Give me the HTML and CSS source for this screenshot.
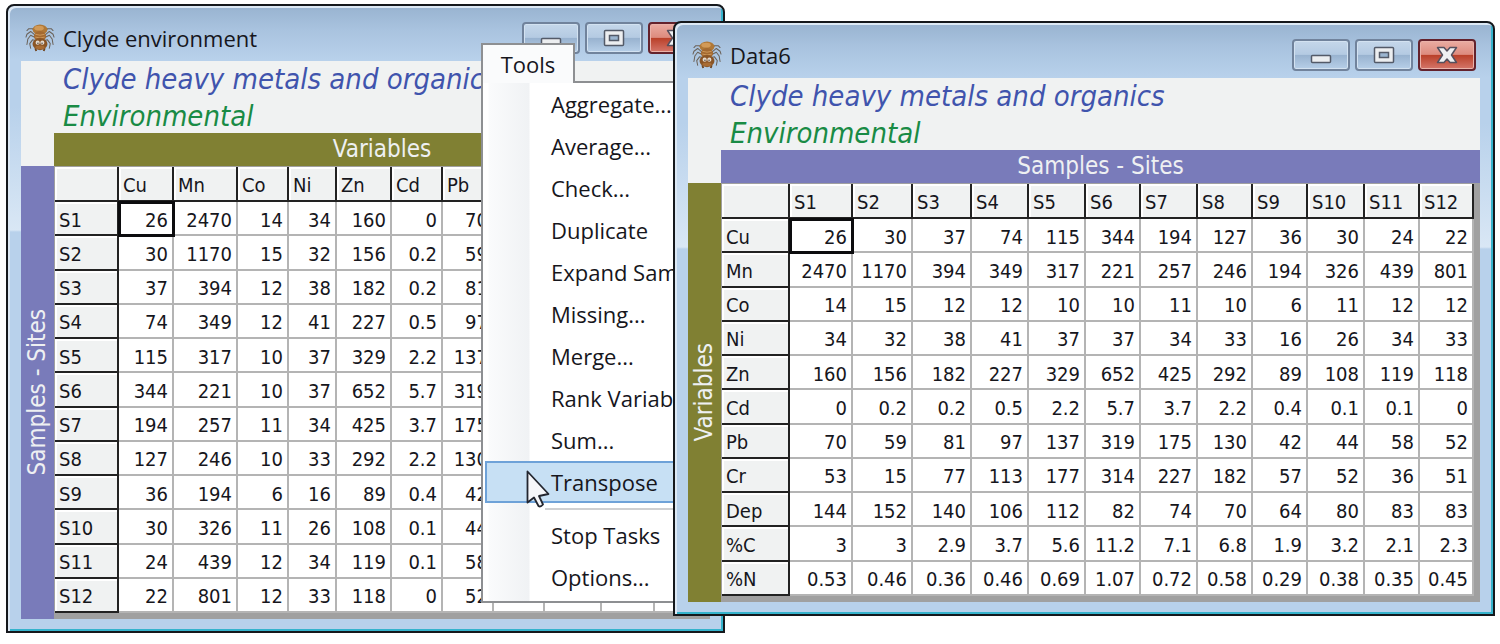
FILE: index.html
```html
<!DOCTYPE html>
<html lang="en">
<head>
<meta charset="utf-8">
<title>Clyde environment</title>
<link rel="stylesheet" href="styles.css">
</head>
<body>
<svg class="defs" aria-hidden="true">
  <symbol id="spider" viewBox="0 0 30 30">
    <g fill="none" stroke="#6b6259" stroke-width="1.1" stroke-linecap="round" stroke-linejoin="round">
      <path d="M11 10 7 5 3 5 1 7M19 10l4-5 4 0 2 2M11 13 5 8 1 11 0 14M19 13l6-5 4 3 1 3M11 15 5 12 2 16 1 22M19 15l6-3 3 4 1 6M11 18l-4-1-3 4 1 5M19 18l4-1 3 4-1 5"/>
    </g>
    <path d="M10 26l1 3M20 26l-1 3" stroke="#70451f" stroke-width="2"/>
    <ellipse cx="15" cy="6" rx="8" ry="5.5" fill="#b07836"/>
    <ellipse cx="14" cy="4.5" rx="5" ry="2.500" fill="#d29a57"/>
    <ellipse cx="15" cy="13" rx="6.500" ry="5.500" fill="#a46a31"/>
    <path d="M10 11q5 2 10 0M10 14q5 2 10 0" stroke="#cf9a5b" fill="none"/>
    <ellipse cx="15" cy="21.500" rx="8" ry="6.500" fill="#8a5526"/>
    <ellipse cx="15" cy="25" rx="5" ry="2" fill="#a86c34"/>
    <circle cx="12.500" cy="20" r="2.200" fill="#e4d9cc"/><circle cx="17.500" cy="20" r="2.200" fill="#e4d9cc"/>
    <circle cx="12.800" cy="20.500" r=".8" fill="#4c4640"/><circle cx="17.200" cy="20.500" r=".8" fill="#4c4640"/>
  </symbol>
  <symbol id="min" viewBox="0 0 22 18">
    <rect x="1.500" y="9.500" width="19" height="7" rx="1" fill="#eceef0" stroke="#535a68" stroke-width="1.500"/>
  </symbol>
  <symbol id="max" viewBox="0 0 22 18">
    <rect x="1.500" y="1.500" width="19" height="15" rx="1" fill="#eceef0" stroke="#535a68" stroke-width="1.500"/>
    <rect x="6.500" y="6.500" width="9" height="5" fill="#9bb5d0" stroke="#535a68" stroke-width="1.500"/>
  </symbol>
  <symbol id="close" viewBox="0 0 22 18">
    <path d="M1.500 1.500h6.500l3 3.500 3-3.500h6.500l-5 7.500 5 7.500h-6.500l-3-3.500-3 3.500h-6.500l5-7.500z" fill="#eff0f2" stroke="#56505e" stroke-width="1.500" stroke-linejoin="round"/>
  </symbol>
</svg>

<main class="desktop">
  <section class="window window-clyde" aria-label="Clyde environment">
    <header class="titlebar">
      <svg class="app-icon" aria-hidden="true"><use href="#spider"/></svg>
      <h1 class="caption">Clyde environment</h1>
      <div class="controls">
        <button class="control" aria-label="Minimize"><svg class="glyph"><use href="#min"/></svg></button>
        <button class="control" aria-label="Maximize"><svg class="glyph"><use href="#max"/></svg></button>
        <button class="control control-close" aria-label="Close"><svg class="glyph"><use href="#close"/></svg></button>
      </div>
    </header>
    <div class="client">
      <div class="headings">
        <p class="heading heading-title">Clyde heavy metals and organics</p>
        <p class="heading heading-type">Environmental</p>
      </div>
      <div class="band band-top band-olive">Variables</div>
      <div class="band band-side band-violet"><span class="side-text">Samples - Sites</span></div>
      <div class="sheet">
        <table class="grid grid-clyde">
          <colgroup><col class="w64"><col class="w55"><col class="w64"><col class="w51"><col class="w48"><col class="w55"><col class="w51"><col class="w51"><col class="w51"><col class="w57"><col class="w53"><col class="w49"></colgroup>
          <thead><tr><th></th><th>Cu</th><th>Mn</th><th>Co</th><th>Ni</th><th>Zn</th><th>Cd</th><th>Pb</th><th>Cr</th><th>Dep</th><th>%C</th><th>%N</th></tr></thead>
          <tbody>
            <tr><th>S1</th><td class="active">26</td><td>2470</td><td>14</td><td>34</td><td>160</td><td>0</td><td>70</td><td>53</td><td>144</td><td>3</td><td>0.53</td></tr>
            <tr><th>S2</th><td>30</td><td>1170</td><td>15</td><td>32</td><td>156</td><td>0.2</td><td>59</td><td>15</td><td>152</td><td>3</td><td>0.46</td></tr>
            <tr><th>S3</th><td>37</td><td>394</td><td>12</td><td>38</td><td>182</td><td>0.2</td><td>81</td><td>77</td><td>140</td><td>2.9</td><td>0.36</td></tr>
            <tr><th>S4</th><td>74</td><td>349</td><td>12</td><td>41</td><td>227</td><td>0.5</td><td>97</td><td>113</td><td>106</td><td>3.7</td><td>0.46</td></tr>
            <tr><th>S5</th><td>115</td><td>317</td><td>10</td><td>37</td><td>329</td><td>2.2</td><td>137</td><td>177</td><td>112</td><td>5.6</td><td>0.69</td></tr>
            <tr><th>S6</th><td>344</td><td>221</td><td>10</td><td>37</td><td>652</td><td>5.7</td><td>319</td><td>314</td><td>82</td><td>11.2</td><td>1.07</td></tr>
            <tr><th>S7</th><td>194</td><td>257</td><td>11</td><td>34</td><td>425</td><td>3.7</td><td>175</td><td>227</td><td>74</td><td>7.1</td><td>0.72</td></tr>
            <tr><th>S8</th><td>127</td><td>246</td><td>10</td><td>33</td><td>292</td><td>2.2</td><td>130</td><td>182</td><td>70</td><td>6.8</td><td>0.58</td></tr>
            <tr><th>S9</th><td>36</td><td>194</td><td>6</td><td>16</td><td>89</td><td>0.4</td><td>42</td><td>57</td><td>64</td><td>1.9</td><td>0.29</td></tr>
            <tr><th>S10</th><td>30</td><td>326</td><td>11</td><td>26</td><td>108</td><td>0.1</td><td>44</td><td>52</td><td>80</td><td>3.2</td><td>0.38</td></tr>
            <tr><th>S11</th><td>24</td><td>439</td><td>12</td><td>34</td><td>119</td><td>0.1</td><td>58</td><td>36</td><td>83</td><td>2.1</td><td>0.35</td></tr>
            <tr><th>S12</th><td>22</td><td>801</td><td>12</td><td>33</td><td>118</td><td>0</td><td>52</td><td>51</td><td>83</td><td>2.3</td><td>0.45</td></tr>
          </tbody>
        </table>
      </div>
    </div>
  </section>

  <nav class="tools" aria-label="Tools">
    <button class="tools-tab">Tools</button>
    <div class="menu">
      <button class="item">Aggregate...</button>
      <button class="item">Average...</button>
      <button class="item">Check...</button>
      <button class="item">Duplicate</button>
      <button class="item">Expand Samples...</button>
      <button class="item">Missing...</button>
      <button class="item">Merge...</button>
      <button class="item">Rank Variables...</button>
      <button class="item">Sum...</button>
      <button class="item item-hot">Transpose
        <svg class="cursor" viewBox="0 0 24 38" aria-hidden="true"><path d="M1.500 1.500v31l6.500-5 4.500 8.500q2 1.500 4.500-1.500l-4-8.500 9.500-2z" fill="#f6f7fa" stroke="#23262f" stroke-width="1.800" stroke-linejoin="round"/></svg>
      </button>
      <hr class="rule">
      <button class="item">Stop Tasks</button>
      <button class="item">Options...</button>
    </div>
  </nav>

  <section class="window window-data" aria-label="Data6">
    <header class="titlebar">
      <svg class="app-icon" aria-hidden="true"><use href="#spider"/></svg>
      <h2 class="caption">Data6</h2>
      <div class="controls">
        <button class="control" aria-label="Minimize"><svg class="glyph"><use href="#min"/></svg></button>
        <button class="control" aria-label="Maximize"><svg class="glyph"><use href="#max"/></svg></button>
        <button class="control control-close" aria-label="Close"><svg class="glyph"><use href="#close"/></svg></button>
      </div>
    </header>
    <div class="client">
      <div class="headings">
        <p class="heading heading-title">Clyde heavy metals and organics</p>
        <p class="heading heading-type">Environmental</p>
      </div>
      <div class="band band-top band-violet">Samples - Sites</div>
      <div class="band band-side band-olive"><span class="side-text">Variables</span></div>
      <div class="sheet">
        <table class="grid grid-data">
          <colgroup><col class="w68"><col class="w63"><col class="w60"><col class="w59"><col class="w57"><col class="w57"><col class="w55"><col class="w57"><col class="w55"><col class="w55"><col class="w57"><col class="w55"><col class="w54"></colgroup>
          <thead><tr><th></th><th>S1</th><th>S2</th><th>S3</th><th>S4</th><th>S5</th><th>S6</th><th>S7</th><th>S8</th><th>S9</th><th>S10</th><th>S11</th><th>S12</th></tr></thead>
          <tbody>
            <tr><th>Cu</th><td class="active">26</td><td>30</td><td>37</td><td>74</td><td>115</td><td>344</td><td>194</td><td>127</td><td>36</td><td>30</td><td>24</td><td>22</td></tr>
            <tr><th>Mn</th><td>2470</td><td>1170</td><td>394</td><td>349</td><td>317</td><td>221</td><td>257</td><td>246</td><td>194</td><td>326</td><td>439</td><td>801</td></tr>
            <tr><th>Co</th><td>14</td><td>15</td><td>12</td><td>12</td><td>10</td><td>10</td><td>11</td><td>10</td><td>6</td><td>11</td><td>12</td><td>12</td></tr>
            <tr><th>Ni</th><td>34</td><td>32</td><td>38</td><td>41</td><td>37</td><td>37</td><td>34</td><td>33</td><td>16</td><td>26</td><td>34</td><td>33</td></tr>
            <tr><th>Zn</th><td>160</td><td>156</td><td>182</td><td>227</td><td>329</td><td>652</td><td>425</td><td>292</td><td>89</td><td>108</td><td>119</td><td>118</td></tr>
            <tr><th>Cd</th><td>0</td><td>0.2</td><td>0.2</td><td>0.5</td><td>2.2</td><td>5.7</td><td>3.7</td><td>2.2</td><td>0.4</td><td>0.1</td><td>0.1</td><td>0</td></tr>
            <tr><th>Pb</th><td>70</td><td>59</td><td>81</td><td>97</td><td>137</td><td>319</td><td>175</td><td>130</td><td>42</td><td>44</td><td>58</td><td>52</td></tr>
            <tr><th>Cr</th><td>53</td><td>15</td><td>77</td><td>113</td><td>177</td><td>314</td><td>227</td><td>182</td><td>57</td><td>52</td><td>36</td><td>51</td></tr>
            <tr><th>Dep</th><td>144</td><td>152</td><td>140</td><td>106</td><td>112</td><td>82</td><td>74</td><td>70</td><td>64</td><td>80</td><td>83</td><td>83</td></tr>
            <tr><th>%C</th><td>3</td><td>3</td><td>2.9</td><td>3.7</td><td>5.6</td><td>11.2</td><td>7.1</td><td>6.8</td><td>1.9</td><td>3.2</td><td>2.1</td><td>2.3</td></tr>
            <tr><th>%N</th><td>0.53</td><td>0.46</td><td>0.36</td><td>0.46</td><td>0.69</td><td>1.07</td><td>0.72</td><td>0.58</td><td>0.29</td><td>0.38</td><td>0.35</td><td>0.45</td></tr>
          </tbody>
        </table>
      </div>
    </div>
  </section>
</main>
</body>
</html>
```

FILE: styles.css
```css
* { box-sizing: border-box; }
body { margin: 0; background: #fff; }
button { margin: 0; padding: 0; border: 0; background: none; font: inherit; color: inherit; }
.defs { position: absolute; width: 0; height: 0; }

.desktop {
  position: relative;
  min-height: 100vh;
  overflow: hidden;
  color: #16161c;
  font-family: "DejaVu Sans Condensed", "DejaVu Sans", sans-serif;
  font-size: 20px;
}

/* Windows */
.window {
  position: absolute;
  padding: 0 13px 12px;
  border: 2px solid #15181c;
  border-radius: 8px 8px 0 0;
  background:
    linear-gradient(#98b3d0, #a9c3df 24px, #b8d1eb 54px, #b8d1eb 100px, #d9e7f5 224px, #b8d1eb 226px);
  box-shadow: inset 2px 2px #dde9f5, inset -2px -2px #35b3cc;
}
.window-clyde { left: 6px; top: 4px; }
.window-data { left: 673px; top: 21px; z-index: 2; }

.titlebar {
  display: flex;
  align-items: center;
  gap: 8px;
  height: 55px;
  padding: 8px 0 0 4px;
}
.app-icon { width: 30px; height: 28px; }
.caption {
  flex: 1;
  margin: 0;
  font: 400 22px/30px "Open Sans", "Noto Sans", sans-serif;
}
.controls { display: flex; gap: 5px; padding-right: 4px; }
.control {
  display: grid;
  place-items: center;
  width: 58px;
  height: 32px;
  border: 2px solid #71839c;
  border-radius: 4px;
  background: linear-gradient(#c5d7ea, #b4cae2 48%, #98b2cf 50%, #b7cfe8);
  box-shadow: inset 0 0 0 1px #d3e2f1;
}
.control-close {
  border-color: #64222c;
  background: linear-gradient(#eaaca2, #dd8b7e 48%, #b93f28 50%, #d5766a);
  box-shadow: inset 0 0 0 1px #eab2a9;
}
.glyph { width: 22px; height: 18px; }

.client {
  display: grid;
  grid-template-columns: 33px auto;
  background: #f0f2f2;
}
.headings { grid-column: 1 / -1; padding: 0 42px; height: 72px; }
.heading {
  margin: 0;
  font-style: italic;
  font-size: 29px;
  line-height: 37px;
  white-space: nowrap;
}
.heading-title { color: #4054ad; }
.heading-type { color: #198b45; }

.band { color: #eef0f2; font-size: 24px; }
.band-top { grid-column: 2; height: 33px; line-height: 33px; text-align: center; }
.band-side { display: grid; place-items: center; }
.band-olive { background: #808033; }
.band-violet { background: #797bba; }
.side-text { writing-mode: vertical-rl; transform: rotate(180deg); line-height: 33px; }

/* Data sheets */
.sheet { padding: 1px 6px 6px 1px; background: #a0a0a0; }
.grid { table-layout: fixed; border-collapse: separate; border-spacing: 0; background: #fff; }
.grid-clyde { width: 648px; height: 446px; }
.grid-data { width: 752px; height: 412px; }
.grid th, .grid td {
  padding: 3px 4px 0;
  border: 0 solid #b4b4b4;
  border-width: 0 2px 2px 0;
  font-weight: 400;
  line-height: 24px;
}
.grid thead th { height: 35px; }
.grid th {
  border-color: #222;
  background: #f0f2f2;
  box-shadow: inset 2px 2px #fff;
  text-align: left;
}
.grid td { text-align: right; }
.grid .active { outline: 3px solid #0c0c0e; outline-offset: -2px; }

.w48 { width: 48px; } .w49 { width: 49px; } .w51 { width: 51px; }
.w53 { width: 53px; } .w54 { width: 54px; } .w55 { width: 55px; }
.w57 { width: 57px; } .w59 { width: 59px; } .w60 { width: 60px; }
.w63 { width: 63px; } .w64 { width: 64px; } .w68 { width: 68px; }

/* Tools menu */
.tools {
  position: absolute;
  z-index: 1;
  left: 481px;
  top: 43px;
  font: 400 22px/30px "Open Sans", "Noto Sans", sans-serif;
}
.tools-tab {
  position: relative;
  z-index: 1;
  display: block;
  width: 94px;
  height: 40px;
  border: 2px solid #8d8f92;
  border-bottom: 0;
  background: #fafbfc;
}
.menu {
  width: 260px;
  margin-top: -2px;
  padding: 0 2px 3px;
  border: 2px solid #8d8f92;
  background: linear-gradient(90deg, #fff 5px, #fafbfc 6px, #f0f2f4 46px, #fff 47px);
}
.item {
  position: relative;
  display: block;
  width: 100%;
  height: 42px;
  padding-left: 66px;
  text-align: left;
  white-space: nowrap;
}
.item-hot {
  z-index: 1;
  border: 2px solid #6ea2d8;
  padding-left: 64px;
  background: #c7e0f4;
}
.cursor { position: absolute; left: 39px; top: 7px; width: 24px; height: 38px; }
.rule { height: 2px; margin: 5px 0 4px 60px; border: 0; background: #cfd0d2; }
```
